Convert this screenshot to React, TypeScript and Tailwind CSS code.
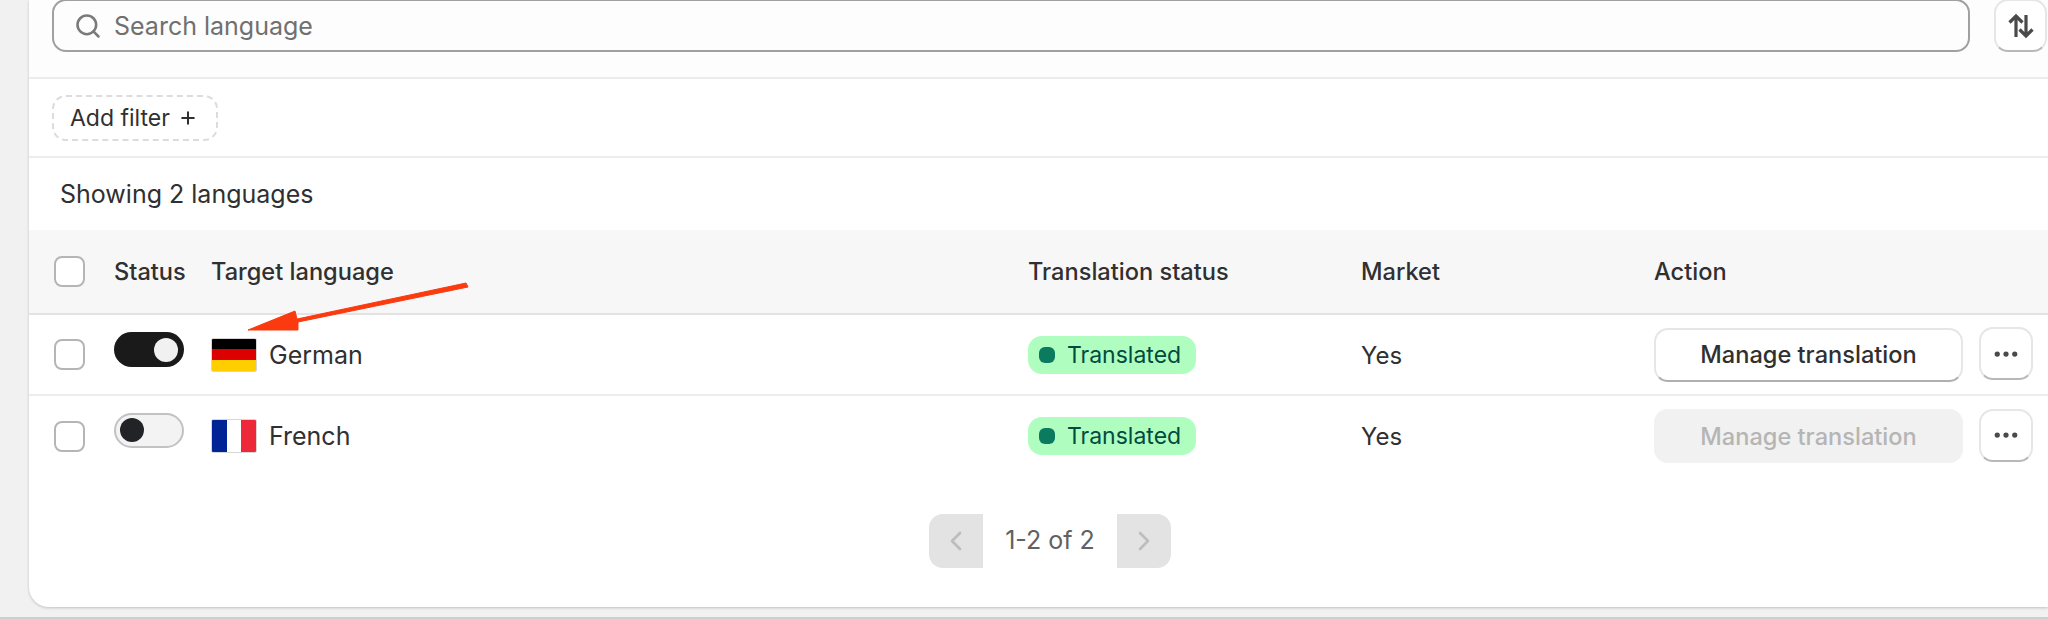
import { ChevronLeft, ChevronRight, Ellipsis, Plus, Search } from 'lucide-react';

const rowGrid = 'grid grid-cols-[60px_97px_817px_333px_293px_1fr] items-center pl-[25px]';

function Checkbox() {
  return <div className="h-[31px] w-[31px] rounded-[8px] border-2 border-[#b5b5b5] bg-white" />;
}

function Toggle({ on }: { on: boolean }) {
  return on ? (
    <div className="mb-[10px] flex h-[35px] w-[70px] items-center justify-end rounded-full bg-[#1a1a1a] px-[6px]">
      <div className="h-[24px] w-[24px] rounded-full bg-[#f1f1f1]" />
    </div>
  ) : (
    <div className="mb-[12px] flex h-[35px] w-[70px] items-center rounded-full border-2 border-[#c2c2c2] bg-[#f3f3f3] px-[4px]">
      <div className="h-[24px] w-[24px] rounded-full bg-[#222326]" />
    </div>
  );
}

function GermanFlag() {
  return (
    <div className="flex h-[34px] w-[46px] flex-col overflow-hidden rounded-[2px] border border-[#d6d6d6]">
      <div className="flex-1 bg-black" />
      <div className="flex-1 bg-[#dd0000]" />
      <div className="flex-1 bg-[#ffce00]" />
    </div>
  );
}

function FrenchFlag() {
  return (
    <div className="flex h-[34px] w-[46px] overflow-hidden rounded-[2px] border border-[#d6d6d6]">
      <div className="flex-1 bg-[#002395]" />
      <div className="flex-1 bg-white" />
      <div className="flex-1 bg-[#ed2939]" />
    </div>
  );
}

function Badge() {
  return (
    <div className="flex h-[38px] w-[168px] items-center gap-[12px] rounded-[14px] bg-[#affebf] pl-[11px] text-[#014b40]">
      <div className="h-[16px] w-[16px] rounded-[6px] bg-[#0c7a5e]" />
      <span className="mt-[1px]">Translated</span>
    </div>
  );
}

function MoreButton() {
  return (
    <button className="mb-[2px] ml-[16px] flex h-[53px] w-[54px] shrink-0 items-center justify-center rounded-[14px] border-2 border-[#e6e6e6] border-b-[#b8b8b8] bg-white text-[#4a4a4a]">
      <Ellipsis size={30} strokeWidth={2.2} />
    </button>
  );
}

function Row({ name, flag, on, last }: { name: string; flag: React.ReactNode; on: boolean; last?: boolean }) {
  return (
    <div className={`${rowGrid} ${last ? 'h-[80px]' : 'h-[81px] border-b-2 border-[#ececec]'}`}>
      <Checkbox />
      <Toggle on={on} />
      <div className="flex items-center gap-[12px]">
        {flag}
        <span className="mt-[2px] text-[25px]">{name}</span>
      </div>
      <Badge />
      <span className="mt-[2px] text-[24px]">Yes</span>
      <div className="flex items-center">
        {on ? (
          <button className="h-[54px] w-[309px] rounded-[14px] border-2 border-[#e6e6e6] border-b-[#b0b0b0] bg-white pt-[1px] text-[23.6px] font-[550] text-[#303030]">
            Manage translation
          </button>
        ) : (
          <button className="h-[54px] w-[309px] rounded-[14px] bg-[#f1f1f1] pt-[1px] text-[23.6px] font-[550] text-[#b5b5b5]">
            Manage translation
          </button>
        )}
        <MoreButton />
      </div>
    </div>
  );
}

export default function App() {
  return (
    <div className="relative h-[619px] w-[2048px] overflow-hidden bg-[#f1f1f1] pl-[29px] font-['Inter',sans-serif] text-[23px] text-[#303030]">
      {/* Card, cut off by the top and right of the screenshot */}
      <div className="h-[607px] rounded-bl-[20px] bg-white shadow-[0_1px_3px_rgba(0,0,0,0.2)]">
        <div className="flex h-[79px] border-b-2 border-[#ececec] bg-[#fdfdfd] pl-[23px]">
          <div className="-mt-[1px] flex h-[53px] w-[1918px] items-center gap-[12px] rounded-[14px] border-2 border-[#a0a0a0] pl-[20px] text-[#707070]">
            <Search size={28} strokeWidth={2.2} className="text-[#7a7a7a]" />
            <span className="mt-[2px] text-[25px]">Search language</span>
          </div>
          <button className="-mt-[1px] ml-[24px] flex h-[53px] w-[53px] items-center justify-center rounded-[14px] border-2 border-[#e6e6e6] border-b-[#b8b8b8] bg-white text-[#4a4a4a]">
            <svg width="28" height="26" viewBox="0 0 28 26" fill="none" stroke="currentColor" strokeWidth="3.2">
              <path d="M9 24V3M2.5 9.5L9 3l6.5 6.5" />
              <path d="M19 2v21M12.5 16.5L19 23l6.5-6.5" />
            </svg>
          </button>
        </div>
        <div className="flex h-[79px] items-center border-b-2 border-[#ececec] pl-[23px]">
          <div className="flex h-[46px] w-[166px] items-center gap-[8px] rounded-[14px] border-2 border-dashed border-[#dcdcdc] pl-[16px]">
            <span className="mt-[1px]">Add filter</span>
            <Plus size={20} strokeWidth={2.4} />
          </div>
        </div>
        <div className="flex h-[72px] items-center pl-[31px] pt-[2px] text-[25px]">Showing 2 languages</div>
        <div className={`${rowGrid} h-[85px] border-b-2 border-[#e3e3e3] bg-[#f7f7f7] text-[23.6px] font-[550]`}>
          <Checkbox />
          <span className="mt-[1px]">Status</span>
          <span className="mt-[1px]">Target language</span>
          <span className="mt-[1px]">Translation status</span>
          <span className="mt-[1px]">Market</span>
          <span className="mt-[1px]">Action</span>
        </div>
        <Row name="German" flag={<GermanFlag />} on />
        <Row name="French" flag={<FrenchFlag />} on={false} last />
        <div className="mt-[38px] flex items-center justify-center pl-[23px]">
          <div className="flex h-[54px] w-[54px] items-center justify-center rounded-l-[14px] bg-[#e3e3e3] text-[#bdbdbd]">
            <ChevronLeft size={32} strokeWidth={2} />
          </div>
          <div className="w-[134px] text-center text-[25px] text-[#616161]">1-2 of 2</div>
          <div className="flex h-[54px] w-[54px] items-center justify-center rounded-r-[14px] bg-[#e3e3e3] text-[#bdbdbd]">
            <ChevronRight size={32} strokeWidth={2} />
          </div>
        </div>
      </div>

      <div className="absolute bottom-0 left-0 h-[2px] w-full bg-[#cfcfcf]" />

      {/* Red annotation arrow drawn over the table */}
      <svg className="absolute left-0 top-0" width="2048" height="619" fill="none">
        <path d="M248 330 L295 311 L297 319 L466 283 L468 287 L298 322 L298 330 Z" fill="#fb3a10" stroke="#fb3a10" strokeWidth="1" strokeLinejoin="round" />
      </svg>
    </div>
  );
}
